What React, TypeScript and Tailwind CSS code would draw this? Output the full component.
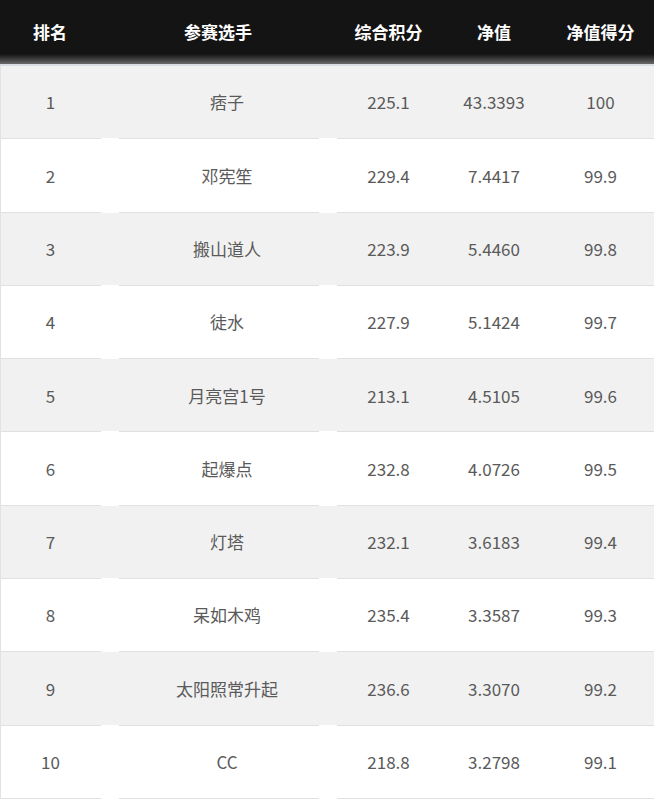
import React from "react";

const rows = [
  ["1", "痞子", "225.1", "43.3393", "100"],
  ["2", "邓宪笙", "229.4", "7.4417", "99.9"],
  ["3", "搬山道人", "223.9", "5.4460", "99.8"],
  ["4", "徒水", "227.9", "5.1424", "99.7"],
  ["5", "月亮宫1号", "213.1", "4.5105", "99.6"],
  ["6", "起爆点", "232.8", "4.0726", "99.5"],
  ["7", "灯塔", "232.1", "3.6183", "99.4"],
  ["8", "呆如木鸡", "235.4", "3.3587", "99.3"],
  ["9", "太阳照常升起", "236.6", "3.3070", "99.2"],
  ["10", "CC", "218.8", "3.2798", "99.1"],
];

function BorderLine() {
  return (
    <div className="flex h-px">
      <div className="w-[100px] bg-[#dfe0e2]" />
      <div className="w-[18px] bg-white" />
      <div className="w-[200px] bg-[#dfe0e2]" />
      <div className="w-[18px] bg-white" />
      <div className="flex-1 bg-[#dfe0e2]" />
    </div>
  );
}

export default function App() {
  return (
    <div
      className="w-[654px] h-[801px] bg-white overflow-hidden"
      style={{ fontFamily: '"Noto Sans CJK SC", "Noto Sans", sans-serif' }}
    >
      <div className="relative h-[64px] bg-[#141414] flex items-center text-white font-bold text-[17px]">
        <div className="w-[100px] text-center">排名</div>
        <div className="w-[236px] text-center">参赛选手</div>
        <div className="w-[105px] text-center">综合积分</div>
        <div className="w-[106px] text-center">净值</div>
        <div className="flex-1 text-center">净值得分</div>
        <div className="absolute left-0 right-0 bottom-0 h-[10px] bg-gradient-to-b from-[#141414] to-[#6a6a6a]" />
      </div>
      <div className="h-[2px] bg-[#d9dce0]" />
      <div className="border-l border-[#e2e2e2]">
        {rows.map((r, i) => (
          <div
            key={i}
            className={`h-[73.3px] flex flex-col ${i % 2 === 0 ? "bg-[#f1f1f1]" : "bg-white"}`}
          >
            <div className="flex-1 flex items-center text-[#5a5a5a] text-[17px]">
              <div className="w-[99px] text-center">{r[0]}</div>
              <div className="w-[236px] pl-[18px] text-center">{r[1]}</div>
              <div className="w-[105px] text-center">{r[2]}</div>
              <div className="w-[106px] text-center">{r[3]}</div>
              <div className="flex-1 text-center">{r[4]}</div>
            </div>
            <BorderLine />
          </div>
        ))}
      </div>
    </div>
  );
}
